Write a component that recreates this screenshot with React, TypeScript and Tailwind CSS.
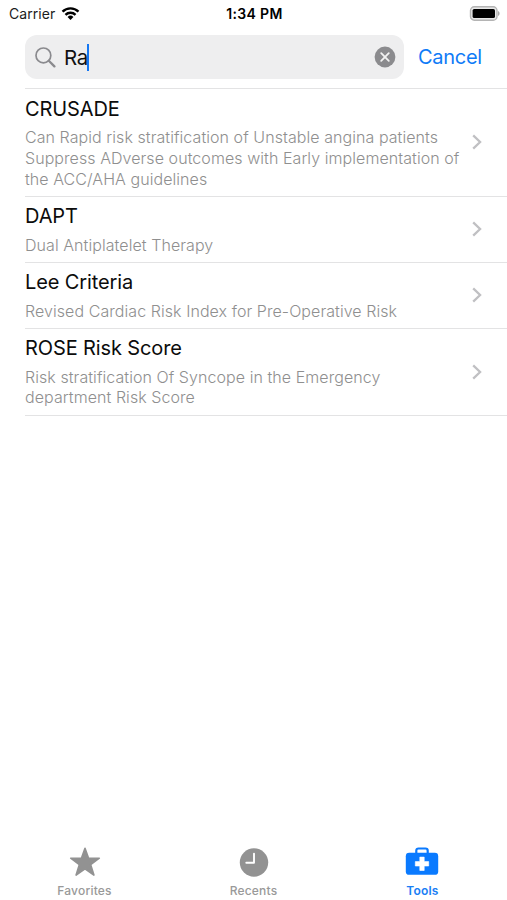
import { useState } from 'react';

interface Tool {
  name: string;
  lines: string[];
}

const tools: Tool[] = [
  {
    name: 'CRUSADE',
    lines: [
      'Can Rapid risk stratification of Unstable angina patients',
      'Suppress ADverse outcomes with Early implementation of',
      'the ACC/AHA guidelines',
    ],
  },
  { name: 'DAPT', lines: ['Dual Antiplatelet Therapy'] },
  { name: 'Lee Criteria', lines: ['Revised Cardiac Risk Index for Pre-Operative Risk'] },
  {
    name: 'ROSE Risk Score',
    lines: ['Risk stratification Of Syncope in the Emergency', 'department Risk Score'],
  },
];

function StatusBar() {
  return (
    <div className="grid grid-cols-3 items-center h-[27px] pl-[9px] pr-[7px] text-[14px] text-[#1c1c1c]">
      <div className="flex items-center gap-[6px]">
        <span className="tracking-[0.05px]">Carrier</span>
        <svg className="w-[19px] h-[15px]" viewBox="0 0 20 15" fill="none" stroke="#000" strokeWidth="2.5">
          <path d="M1.6 5.6a12 12 0 0 1 16.8 0" />
          <path d="M4.7 8.9a7.5 7.5 0 0 1 10.6 0" />
          <path d="M10 14.3 6.9 11.2a4.4 4.4 0 0 1 6.2 0Z" fill="#000" stroke="none" />
        </svg>
      </div>
      <span className="text-center font-semibold tracking-[0.35px] text-black whitespace-nowrap">1:34 PM</span>
      <svg className="justify-self-end w-[31px] h-[15px]" viewBox="0 0 31 15">
        <rect x="1.5" y=".8" width="26.5" height="13.4" rx="3.8" fill="#e8e8e8" stroke="#b4b4b4" strokeWidth="1.4" />
        <rect x="3.6" y="2.9" width="22.4" height="9.2" rx="1.6" fill="#000" />
        <path d="M29 5v5c1-.4 1.6-1.4 1.6-2.5S30 5.4 29 5Z" fill="#aaa" />
      </svg>
    </div>
  );
}

function Chevron() {
  return (
    <svg className="w-[10px] h-[16px] shrink-0" viewBox="0 0 10 16" fill="none" stroke="#c0c0c3" strokeWidth="2.3">
      <path d="m1.2 1.3 6.9 6.7-6.9 6.7" />
    </svg>
  );
}

function StarIcon() {
  return (
    <svg className="w-[32px] h-[32px]" viewBox="0 0 32 32" fill="#929292" stroke="#929292" strokeWidth="1.6" strokeLinejoin="round">
      <path d="m16 2.2 3.5 9.8 10.8.2-8.6 6.5 3.2 10.4-8.9-6.3-8.9 6.3 3.2-10.4-8.6-6.5 10.8-.2Z" />
    </svg>
  );
}

function ClockIcon() {
  return (
    <svg className="w-[32px] h-[32px]" viewBox="0 0 32 32">
      <circle cx="16" cy="16.5" r="14.2" fill="#929292" />
      <path d="M16 7.6v9.1H8.3" fill="none" stroke="#fff" strokeWidth="1.9" strokeLinecap="round" strokeLinejoin="round" />
    </svg>
  );
}

function KitIcon() {
  return (
    <svg className="w-[34px] h-[32px] -ml-px" viewBox="0 0 34 32">
      <path d="M11.3 7.5V4.7c0-1.4.8-2.2 2.2-2.2h7c1.4 0 2.2.8 2.2 2.2v2.8" fill="none" stroke="#0a7aff" strokeWidth="2.2" />
      <rect x=".8" y="6.8" width="32.4" height="22" rx="3.4" fill="#0a7aff" />
      <path d="M14.8 11.1h4.4v4.5h4.5V20h-4.5v4.5h-4.4V20h-4.5v-4.4h4.5Z" fill="#fff" stroke="#fff" strokeWidth=".6" strokeLinejoin="round" />
    </svg>
  );
}

const tabs = [
  { label: 'Favorites', icon: <StarIcon /> },
  { label: 'Recents', icon: <ClockIcon /> },
  { label: 'Tools', icon: <KitIcon /> },
];

export default function App() {
  const [query, setQuery] = useState('Ra');
  const [activeTab, setActiveTab] = useState('Tools');

  return (
    <div className="h-screen flex flex-col bg-white font-['Inter',sans-serif] overflow-hidden">
      <StatusBar />

      <div className="flex items-start pt-2 pl-[25px] h-[61.3px]">
        <div className="flex items-center w-[379px] h-[44px] rounded-[12px] bg-[#eeeeef] pl-[10px] pr-[8px]">
          <svg className="w-[21px] h-[21px]" viewBox="0 0 21 21" fill="none" stroke="#8a8a8e" strokeWidth="1.7">
            <circle cx="8.4" cy="8.4" r="7.4" />
            <path d="m13.8 13.8 5.6 5.6" strokeWidth="2.3" strokeLinecap="round" />
          </svg>
          <span className="ml-[8px] mt-px text-[20.5px] leading-[26px] tracking-[-0.4px] text-[#111]">{query}</span>
          <span className="w-[2.5px] h-[27px] -ml-px bg-[#1577f2]" />
          <button className="ml-auto" onClick={() => setQuery('')}>
            <svg className="w-[22px] h-[22px]" viewBox="0 0 22 22">
              <circle cx="11" cy="11" r="10.4" fill="#8b8b8e" />
              <path d="m7.2 7.2 7.6 7.6m0-7.6-7.6 7.6" stroke="#f2f2f2" strokeWidth="1.8" strokeLinecap="round" />
            </svg>
          </button>
        </div>
        <button className="ml-[14px] mt-[9px] text-[20px] leading-[26px] tracking-[-0.3px] text-[#0f7bf7]">Cancel</button>
      </div>

      <div className="ml-[25px] border-t border-[#e3e3e4]">
        {tools.map(tool => (
          <div key={tool.name} className="flex items-center justify-between pt-[6.4px] pb-[6.5px] pr-[25px] border-b border-[#e3e3e4]">
            <div className="whitespace-nowrap">
              <h2 className="text-[20px] leading-[26px] tracking-[-0.12px] text-[#0c0c0c]">{tool.name}</h2>
              <div className="mt-[5.5px] text-[16px] leading-[20.67px] tracking-[0.065px] font-light text-[#8f8f8f]">
                {tool.lines.map(line => (
                  <p key={line}>{line}</p>
                ))}
              </div>
            </div>
            <Chevron />
          </div>
        ))}
      </div>

      <div className="mt-auto grid grid-cols-3 h-[54px]">
        {tabs.map(tab => (
          <button
            key={tab.label}
            onClick={() => setActiveTab(tab.label)}
            className={`flex flex-col items-center text-[12px] leading-[16px] tracking-[0.2px] ${activeTab === tab.label ? 'font-semibold text-[#1a7ef5]' : 'font-medium text-[#999]'}`}
          >
            {tab.icon}
            <span className="mt-[5px]">{tab.label}</span>
          </button>
        ))}
      </div>
    </div>
  );
}
